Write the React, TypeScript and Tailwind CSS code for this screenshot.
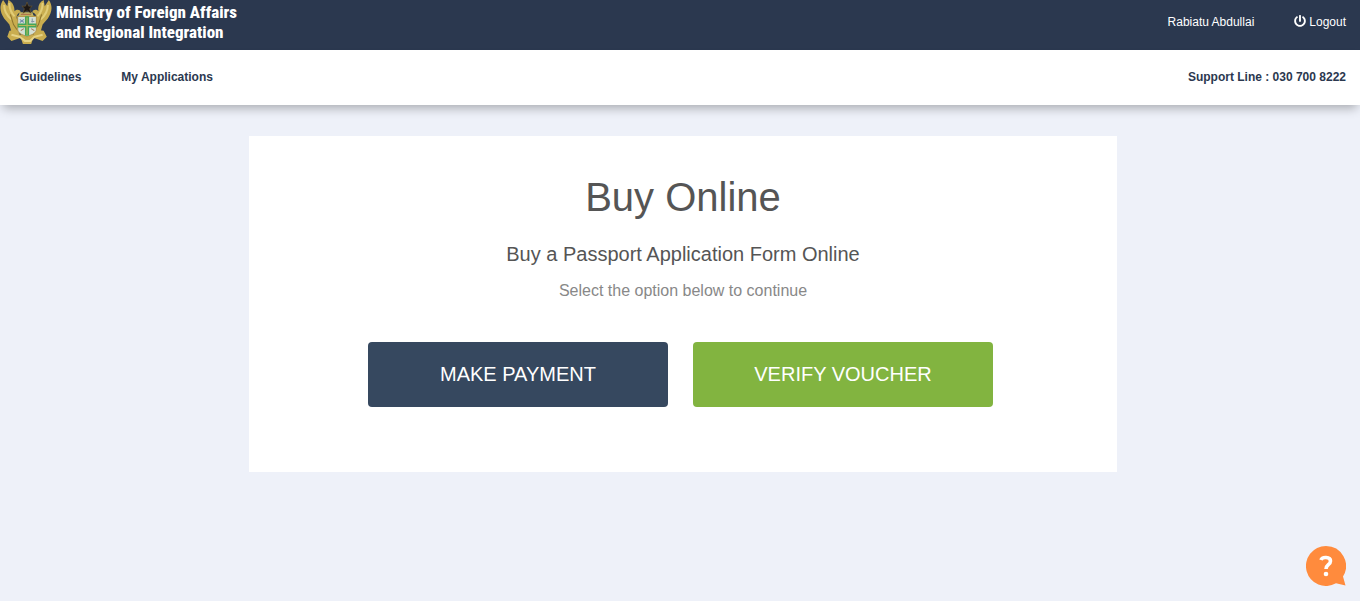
import { FaPowerOff } from "react-icons/fa";

function CoatOfArms() {
  return (
    <svg viewBox="1 0 50 44" preserveAspectRatio="none" className="h-[45px] w-[52px] shrink-0" aria-hidden="true">
      {/* eagles */}
      <path
        d="M4 0 C0 6 1 12 5 18 L10 24 L12 31 L20 32 L18 20 C16 17 17 13 21 12 C20 9 17 9 15 11 C15 6 13 2 9 0 L8 6 Z"
        fill="#c9ad4f"
      />
      <path
        d="M48 0 C52 6 51 12 47 18 L42 24 L40 31 L33 32 L35 20 C37 17 36 13 32 12 C33 9 36 9 38 11 C37 6 39 2 43 0 L44 6 Z"
        fill="#c9ad4f"
      />
      <path d="M5 5 C5 11 7 15 12 19 M10 3 C10 9 12 13 15 16 M47 5 C47 11 45 15 40 19 M42 3 C42 9 40 13 37 16" fill="none" stroke="#e2cd78" strokeWidth="2" />
      <path d="M11 14 L14 24 L18 30 M41 14 L38 24 L34 30" fill="none" stroke="#8e742d" strokeWidth="1" />
      {/* star and crest */}
      <path d="M20 12 L32 12 L34 17 L18 17 Z" fill="#c5b866" />
      <path d="M21 14 H31" stroke="#ad6a4a" strokeWidth="1" />
      <path d="M27 2 L28.5 6 L32 6 L29.5 8.5 L31 13 L27 10.5 L23 13 L24.5 8.5 L22 6 L25.5 6 Z" fill="#1d1714" stroke="#7d6432" strokeWidth="0.5" />
      {/* ribbon */}
      <path
        d="M10 30 L17 29 L20 34 L33 34 L36 29 L43 30 L46 36 L42 40 L33 37 L31 43 L23 43 L21 37 L12 40 L8 36 Z"
        fill="#c9ad4f"
      />
      <path d="M12 34 L20 36 L25 40 L30 40 L34 36 L42 34" fill="none" stroke="#e6d386" strokeWidth="2" />
      {/* shield */}
      <path d="M18 16 H36 V29 C36 33 31 34 27 36 C23 34 18 33 18 29 Z" fill="#d3dfd4" stroke="#b6994b" strokeWidth="1" />
      <path d="M27 16 V35 M18 25 H36" stroke="#45a558" strokeWidth="4" />
      <path d="M27 17 V34 M19 25 H35" stroke="#b9b957" strokeWidth="1" />
      <path d="M20 19 L24 22 M24 19 L20 22" stroke="#7590ad" strokeWidth="1" />
      <path d="M31 21 H34 M32 18 V22" stroke="#8497a5" strokeWidth="1" />
      <path d="M21 30 L24 28 M31 28 L34 30" stroke="#a97853" strokeWidth="1" />
    </svg>
  );
}

function Header() {
  return (
    <header className="flex h-[50px] items-start justify-between bg-[#2b384f] text-white">
      <a href="#" className="flex items-start gap-1">
        <CoatOfArms />
        <span className="pt-0.5 font-['Roboto_Condensed','Liberation_Sans',sans-serif] text-[17px] leading-5 font-extrabold">
          Ministry of Foreign Affairs
          <br />
          and Regional Integration
        </span>
      </a>
      <div className="flex gap-10 pt-3 pr-3.5 text-xs leading-5">
        <a href="#">Rabiatu Abdullai</a>
        <a href="#" className="flex gap-[3px]">
          <FaPowerOff className="mt-[3px] size-3" />
          Logout
        </a>
      </div>
    </header>
  );
}

function NavBar() {
  return (
    <nav className="flex h-[55px] items-center justify-between bg-white pr-3.5 pb-0.5 pl-5 text-xs font-bold text-[#2b384f] shadow-[0_6px_10px_-3px_rgba(0,0,0,0.3)]">
      <div className="flex gap-10">
        <a href="#">Guidelines</a>
        <a href="#">My Applications</a>
      </div>
      <span>Support Line : 030 700 8222</span>
    </nav>
  );
}

function BuyOnline() {
  return (
    <section className="w-full max-w-[868px] bg-white px-6 pt-8 pb-[65px] text-center">
      <h1 className="text-[40px] leading-[58px] text-[#555]">Buy Online</h1>
      <h2 className="mt-3.5 text-xl leading-7 text-[#555]">Buy a Passport Application Form Online</h2>
      <p className="mt-2 text-base leading-[30px] text-[#888]">Select the option below to continue</p>
      <div className="mt-9 flex flex-wrap justify-center gap-[25px] pr-[5px]">
        <button type="button" className="h-[65px] w-[300px] rounded bg-[#36485f] pb-0.5 text-xl text-white">
          MAKE PAYMENT
        </button>
        <button type="button" className="h-[65px] w-[300px] rounded bg-[#82b440] pb-0.5 text-xl text-white">
          VERIFY VOUCHER
        </button>
      </div>
    </section>
  );
}

function HelpButton() {
  return (
    <button type="button" aria-label="Help" className="fixed right-3.5 bottom-[15px] size-10">
      <svg viewBox="0 0 40 40" className="size-10">
        <path d="M20 0 A20 20 0 0 1 37 30.500 L39.500 39.500 L30 37.300 A20 20 0 1 1 20 0 Z" fill="#ff8b3d" />
        <path d="M15 14 C16 10.500 24.500 10.500 24.500 15 C24.500 19 20 18.500 20 23" fill="none" stroke="#fff" strokeWidth="3.600" />
        <circle cx="20" cy="28" r="2.300" fill="#fff" />
      </svg>
    </button>
  );
}

export default function App() {
  return (
    <div className="min-h-screen bg-[#eef1f9] font-['Liberation_Sans',Arial,sans-serif]">
      <Header />
      <NavBar />
      <main className="flex justify-center pt-[31px] pb-10 pl-1.5">
        <BuyOnline />
      </main>
      <HelpButton />
    </div>
  );
}
